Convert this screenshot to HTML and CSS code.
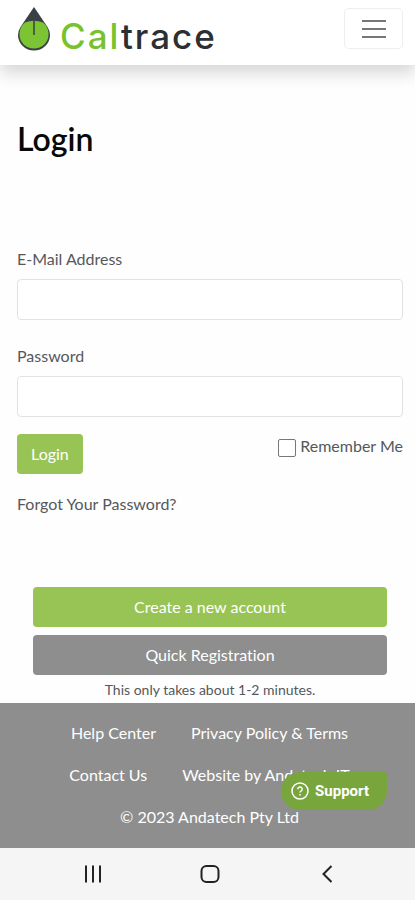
FILE: index.html
```html
<!DOCTYPE html>
<html lang="en">
<head>
<meta charset="utf-8">
<meta name="viewport" content="width=device-width, initial-scale=1">
<title>Caltrace - Login</title>
<link rel="stylesheet" href="styles.css">
</head>
<body>
<header class="navbar">
  <a class="brand" href="#">
    <svg class="brand-mark" viewBox="0 0 34 46" aria-hidden="true">
      <path d="M17 1L3.500 21Q1 25 1 29a16 15.500 0 0 0 32 0Q33 25 30.500 21Z" fill="#3b4045"/>
      <path d="M8 16.500Q17 13 26 16.500C30 19.500 31.500 24 31.500 28.500a14.500 14 0 0 1-29 0C2.500 24 4 19.500 8 16.500Z" fill="#7cc433"/>
      <path d="M17 13v16" stroke="#3b4045" stroke-width="1.500"/>
    </svg>
    <span class="brand-name"><span class="brand-cal">Cal</span>trace</span>
  </a>
  <button class="toggler" type="button" aria-label="Menu">
    <svg viewBox="0 0 24 20" aria-hidden="true"><path d="M0 2h24M0 10h24M0 18h24"/></svg>
  </button>
</header>
<main>
  <h1>Login</h1>
  <form class="login-form">
    <div class="field">
      <label for="email">E-Mail Address</label>
      <input class="text-box" id="email" type="email">
    </div>
    <div class="field">
      <label for="password">Password</label>
      <input class="text-box" id="password" type="password">
    </div>
    <div class="actions">
      <button class="btn btn-login" type="submit">Login</button>
      <div class="remember">
        <input id="remember" type="checkbox">
        <label for="remember">Remember Me</label>
      </div>
    </div>
    <a class="forgot" href="#">Forgot Your Password?</a>
  </form>
  <div class="register">
    <button class="btn" type="button">Create a new account</button>
    <button class="btn btn-grey" type="button">Quick Registration</button>
    <p class="note">This only takes about 1-2 minutes.</p>
  </div>
</main>
<footer class="footer">
  <div class="footer-row"><a href="#">Help Center</a><a href="#">Privacy Policy &amp; Terms</a></div>
  <div class="footer-row"><a href="#">Contact Us</a><a href="#">Website by Andatech IT</a></div>
  <div class="footer-row">© 2023 Andatech Pty Ltd</div>
  <button class="support" type="button">
    <svg viewBox="0 0 18 18" aria-hidden="true"><circle cx="9" cy="9" r="8"/><path d="M6.800 7.200a2.200 2.200 0 1 1 3.300 1.900c-.8.500-1.100.8-1.100 1.500M9 12v1.500"/></svg>
    Support
  </button>
</footer>
<nav class="system-bar" aria-label="System">
  <button type="button" aria-label="Recent apps"><svg viewBox="0 0 20 20"><path d="M3 1.500v17M10 1.500v17M17 1.500v17"/></svg></button>
  <button type="button" aria-label="Home"><svg viewBox="0 0 20 20"><rect x="1.500" y="2" width="17" height="16" rx="5"/></svg></button>
  <button type="button" aria-label="Back"><svg viewBox="0 0 20 20"><path d="M14.500 2L6.500 10l8 8"/></svg></button>
</nav>
</body>
</html>
```
FILE: styles.css
```css
* {
  box-sizing: border-box;
}

body {
  margin: 0;
  min-height: 100vh;
  display: flex;
  flex-direction: column;
  background: #fefefe;
  color: #55585b;
  font: 16px/24px Lato, sans-serif;
  font-variant-ligatures: none;
}

a {
  color: inherit;
  text-decoration: none;
}

button,
input {
  font: inherit;
  font-variant-ligatures: none;
}

.navbar {
  display: flex;
  align-items: center;
  justify-content: space-between;
  padding: 8px 12px 16px 17px;
  background: #fff;
  box-shadow: 0 8px 16px rgba(0, 0, 0, 0.16);
}

.brand {
  display: flex;
  align-items: center;
  gap: 9px;
  height: 41px;
}

.brand-mark {
  width: 34px;
  height: 46px;
}

.brand-name {
  padding-top: 14px;
  color: #2c2f33;
  font: 500 35px/36px Inter, sans-serif;
  letter-spacing: 2px;
}

.brand-cal {
  color: #78c22d;
}

.toggler {
  display: flex;
  align-items: center;
  justify-content: center;
  width: 59px;
  height: 41px;
  padding: 0;
  background: #fff;
  border: 1px solid #eee;
  border-radius: 5px;
}

.toggler svg {
  width: 24px;
  height: 20px;
  fill: none;
  stroke: #777;
  stroke-width: 2;
}

main {
  flex: 1;
  padding: 54px 12px 4px 17px;
}

h1 {
  margin: 0 0 88px;
  color: #080808;
  font: 600 32px/40px Lato, sans-serif;
}

.field {
  margin-bottom: 17px;
}

.field label {
  display: block;
  margin-bottom: 8px;
}

.text-box {
  display: block;
  width: 100%;
  height: 41px;
  padding: 8px 12px;
  background: #fff;
  border: 1px solid #e2e2e2;
  border-radius: 4px;
}

.field + .field {
  margin-top: 24px;
}

.actions {
  display: flex;
  align-items: flex-start;
  justify-content: space-between;
}

.btn {
  display: block;
  width: 100%;
  height: 40px;
  padding: 0 14px;
  background: #98c455;
  border: 0;
  border-radius: 4px;
  color: #fff;
}

.btn-login {
  width: auto;
}

.btn-grey {
  background: #8e8e8e;
}

.remember {
  display: flex;
  align-items: center;
  gap: 4px;
}

.remember input {
  appearance: none;
  width: 18px;
  height: 18px;
  margin: 4px 0 0;
  background: #fff;
  border: 1px solid #777;
  border-radius: 2px;
}

.forgot {
  display: inline-block;
  margin-top: 18px;
}

.register {
  display: grid;
  gap: 8px;
  padding: 71px 16px 0;
}

.note {
  margin: 0;
  font-size: 14px;
  line-height: 14px;
  text-align: center;
}

.footer {
  position: relative;
  display: grid;
  gap: 18px;
  padding: 18px 0 19px;
  background: #8e8e8e;
  color: #fff;
}

.footer-row {
  display: flex;
  justify-content: center;
  gap: 35px;
  padding-left: 4px;
}

.support {
  position: absolute;
  right: 28px;
  bottom: 38px;
  display: flex;
  align-items: center;
  gap: 6px;
  height: 38px;
  padding: 0 18px 0 10px;
  background: #78a63c;
  border: 0;
  border-radius: 19px 4px 19px 19px;
  color: #fff;
  font: 700 15px/20px Roboto, sans-serif;
}

.support svg {
  width: 18px;
  height: 18px;
  fill: none;
  stroke: currentColor;
  stroke-width: 1.5;
}

.system-bar {
  display: grid;
  grid-template-columns: repeat(3, 1fr);
  justify-items: center;
  align-items: center;
  height: 52px;
  padding: 0 30px 0 34px;
  background: #f5f5f5;
}

.system-bar button {
  display: flex;
  padding: 0;
  background: none;
  border: 0;
}

.system-bar svg {
  width: 20px;
  height: 20px;
  fill: none;
  stroke: #222;
  stroke-width: 2;
}
```
